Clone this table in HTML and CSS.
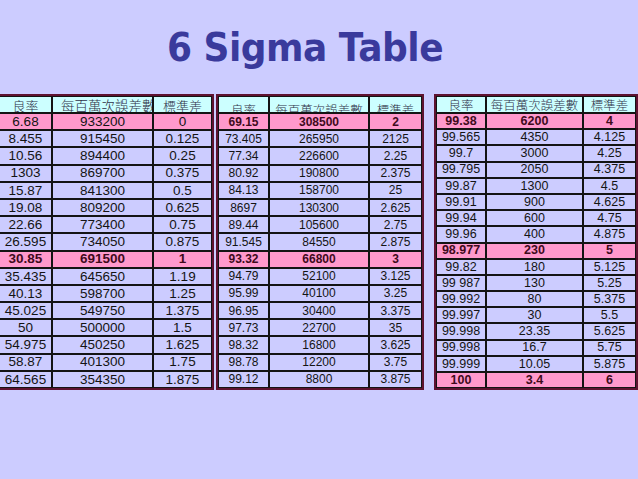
FILE: index.html
```html
<!DOCTYPE html>
<html lang="zh-Hant">
<head>
<meta charset="utf-8">
<title>6 Sigma Table</title>
<link rel="stylesheet" href="styles.css">
</head>
<body>
<div class="title"><h1>6 Sigma Table</h1></div>
<div class="tables">
  <div class="tbl t1">
    <div class="row head"><div>良率</div><div class="long">每百萬次誤差數</div><div>標準差</div></div>
    <div class="row pink"><div>6.68</div><div>933200</div><div>0</div></div>
    <div class="row"><div>8.455</div><div>915450</div><div>0.125</div></div>
    <div class="row"><div>10.56</div><div>894400</div><div>0.25</div></div>
    <div class="row"><div>1303</div><div>869700</div><div>0.375</div></div>
    <div class="row"><div>15.87</div><div>841300</div><div>0.5</div></div>
    <div class="row"><div>19.08</div><div>809200</div><div>0.625</div></div>
    <div class="row"><div>22.66</div><div>773400</div><div>0.75</div></div>
    <div class="row"><div>26.595</div><div>734050</div><div>0.875</div></div>
    <div class="row pink bold"><div>30.85</div><div>691500</div><div>1</div></div>
    <div class="row"><div>35.435</div><div>645650</div><div>1.19</div></div>
    <div class="row"><div>40.13</div><div>598700</div><div>1.25</div></div>
    <div class="row"><div>45.025</div><div>549750</div><div>1.375</div></div>
    <div class="row"><div>50</div><div>500000</div><div>1.5</div></div>
    <div class="row"><div>54.975</div><div>450250</div><div>1.625</div></div>
    <div class="row"><div>58.87</div><div>401300</div><div>1.75</div></div>
    <div class="row"><div>64.565</div><div>354350</div><div>1.875</div></div>
  </div>
  <div class="tbl t2">
    <div class="row head"><div>良率</div><div>每百萬次誤差數</div><div>標準差</div></div>
    <div class="row pink bold"><div>69.15</div><div>308500</div><div>2</div></div>
    <div class="row"><div>73.405</div><div>265950</div><div>2125</div></div>
    <div class="row"><div>77.34</div><div>226600</div><div>2.25</div></div>
    <div class="row"><div>80.92</div><div>190800</div><div>2.375</div></div>
    <div class="row"><div>84.13</div><div>158700</div><div>25</div></div>
    <div class="row"><div>8697</div><div>130300</div><div>2.625</div></div>
    <div class="row"><div>89.44</div><div>105600</div><div>2.75</div></div>
    <div class="row"><div>91.545</div><div>84550</div><div>2.875</div></div>
    <div class="row pink bold"><div>93.32</div><div>66800</div><div>3</div></div>
    <div class="row"><div>94.79</div><div>52100</div><div>3.125</div></div>
    <div class="row"><div>95.99</div><div>40100</div><div>3.25</div></div>
    <div class="row"><div>96.95</div><div>30400</div><div>3.375</div></div>
    <div class="row"><div>97.73</div><div>22700</div><div>35</div></div>
    <div class="row"><div>98.32</div><div>16800</div><div>3.625</div></div>
    <div class="row"><div>98.78</div><div>12200</div><div>3.75</div></div>
    <div class="row"><div>99.12</div><div>8800</div><div>3.875</div></div>
  </div>
  <div class="tbl t3">
    <div class="row head"><div>良率</div><div>每百萬次誤差數</div><div>標準差</div></div>
    <div class="row pink bold"><div>99.38</div><div>6200</div><div>4</div></div>
    <div class="row"><div>99.565</div><div>4350</div><div>4.125</div></div>
    <div class="row"><div>99.7</div><div>3000</div><div>4.25</div></div>
    <div class="row"><div>99.795</div><div>2050</div><div>4.375</div></div>
    <div class="row"><div>99.87</div><div>1300</div><div>4.5</div></div>
    <div class="row"><div>99.91</div><div>900</div><div>4.625</div></div>
    <div class="row"><div>99.94</div><div>600</div><div>4.75</div></div>
    <div class="row"><div>99.96</div><div>400</div><div>4.875</div></div>
    <div class="row pink bold"><div>98.977</div><div>230</div><div>5</div></div>
    <div class="row"><div>99.82</div><div>180</div><div>5.125</div></div>
    <div class="row"><div>99 987</div><div>130</div><div>5.25</div></div>
    <div class="row"><div>99.992</div><div>80</div><div>5.375</div></div>
    <div class="row"><div>99.997</div><div>30</div><div>5.5</div></div>
    <div class="row"><div>99.998</div><div>23.35</div><div>5.625</div></div>
    <div class="row"><div>99.998</div><div>16.7</div><div>5.75</div></div>
    <div class="row"><div>99.999</div><div>10.05</div><div>5.875</div></div>
    <div class="row pink bold"><div>100</div><div>3.4</div><div>6</div></div>
  </div>
</div>
</body>
</html>
```
FILE: styles.css
```css
html, body {
  margin: 0;
  padding: 0;
}
body {
  background: #ccccff;
  width: 638px;
  height: 479px;
  overflow: hidden;
  font-family: "Liberation Sans", Arial, sans-serif;
}
.title {
  height: 94px;
  display: flex;
  align-items: center;
  justify-content: center;
  padding-right: 28px;
}
.title h1 {
  margin: 0;
  font-family: "DejaVu Sans", sans-serif;
  font-weight: bold;
  font-size: 36px;
  letter-spacing: -0.5px;
  color: #3a3a9c;
  transform: scaleY(1.08);
}
.tables {
  display: flex;
  align-items: flex-start;
}
.tbl {
  display: grid;
  gap: 2px;
  padding: 1px;
  background: #141414;
  border: 2px solid #5e1230;
}
.row {
  display: contents;
}
.row > div {
  background: #ccccff;
  color: #141414;
  display: flex;
  align-items: center;
  justify-content: center;
  white-space: nowrap;
  overflow: hidden;
  line-height: 1;
}
.row.head > div {
  background: #ccffff;
  color: #2f3148;
  font-family: "Noto Sans CJK TC", "Noto Sans CJK SC", sans-serif;
  font-weight: 300;
  line-height: 13px;
}
.row.pink > div {
  background: #ff99cc;
}
.row.bold > div {
  font-weight: bold;
  color: #3f0a1c;
}
.t1 {
  margin-left: -3px;
  grid-template-columns: 51px 99px 57px;
  grid-template-rows: 15px repeat(16, 15.2px);
}
.t1 .row > div {
  font-size: 13.5px;
}
.t1 .row.head > div {
  font-size: 13px;
  padding-top: 2px;
}
.t1 .row.head > .long {
  justify-content: flex-start;
  padding-left: 8px;
  font-size: 13.5px;
}
.t2 {
  margin-left: 2px;
  grid-template-columns: 49px 98px 51px;
  grid-template-rows: 15px repeat(16, 15.2px);
}
.t2 .row > div {
  font-size: 12px;
}
.t2 .row.head > div {
  font-size: 12.5px;
  align-items: flex-start;
  padding-top: 6px;
}
.t3 {
  margin-left: 10px;
  grid-template-columns: 48px 95px 51px;
  grid-template-rows: 15px repeat(17, 14.19px);
}
.t3 .row > div {
  font-size: 12.5px;
}
.t3 .row.head > div {
  font-size: 12.5px;
}
```
